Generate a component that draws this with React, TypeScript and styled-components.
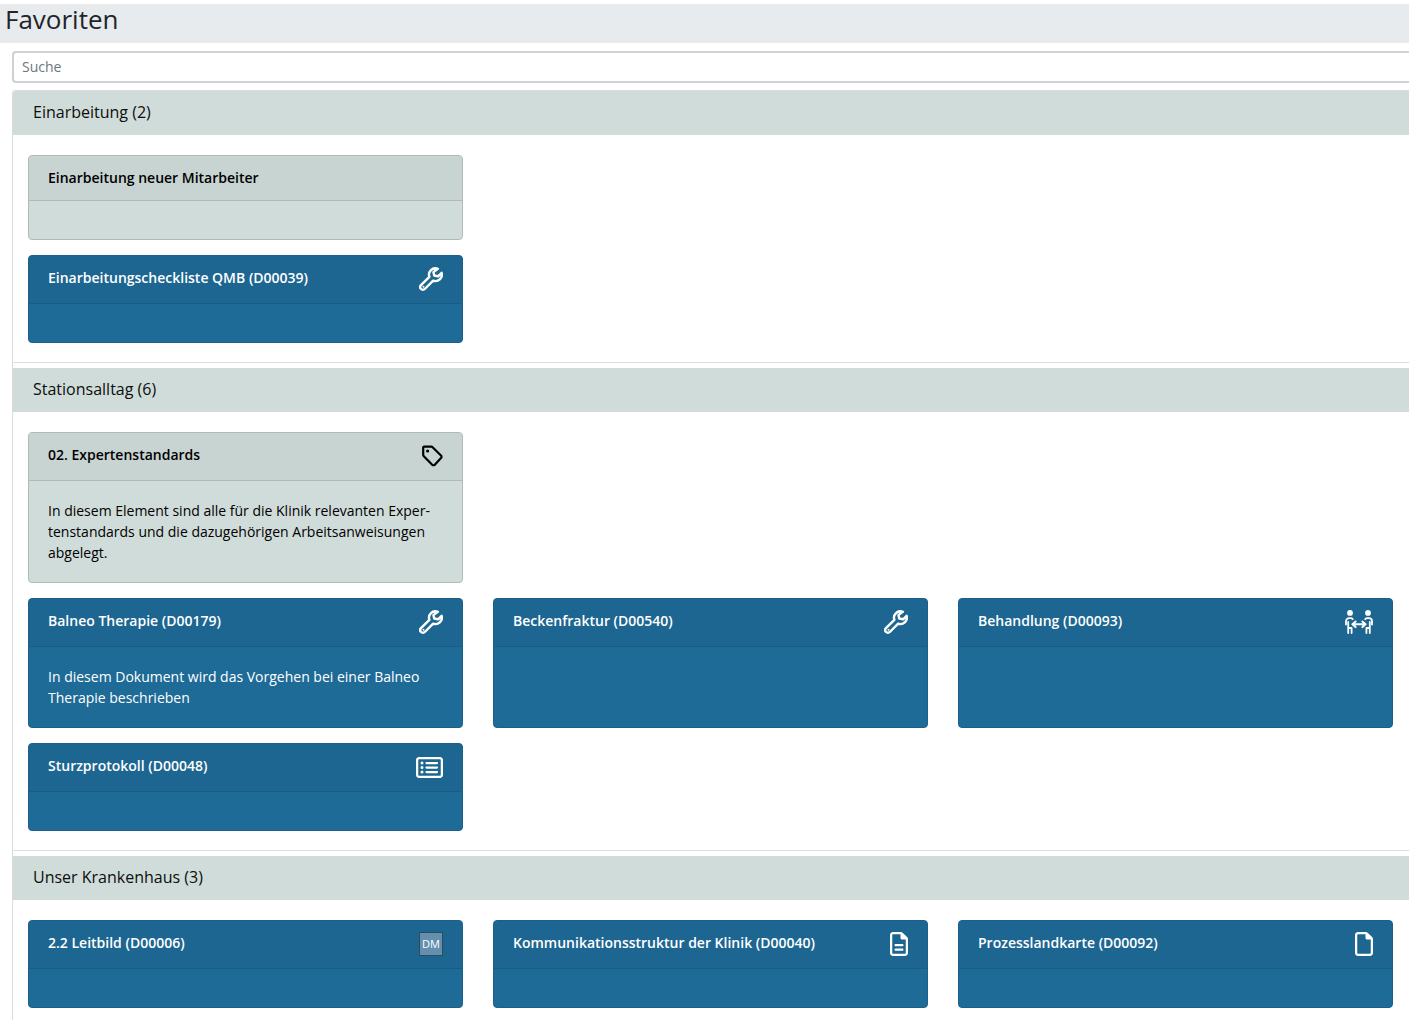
import React from "react";
import styled, { createGlobalStyle } from "styled-components";
import { FaRegFile, FaRegFileLines, FaRegRectangleList } from "react-icons/fa6";

const GlobalStyle = createGlobalStyle`
  *, *::before, *::after { box-sizing: border-box; }
  body {
    margin: 0;
    background: #fff;
    color: #212529;
    font-family: "Open Sans", "Noto Sans", sans-serif;
    font-size: 14px;
    line-height: 21px;
    scrollbar-width: none;
  }
  html { scrollbar-width: none; }
`;

const Page = styled.div`
  padding-top: 4px;
  overflow-x: hidden;
`;

const TitleBar = styled.header`
  padding: 0 5px 9px;
  background: #e8ebee;
`;

const Title = styled.h1`
  margin: 0;
  font-size: 26px;
  font-weight: 400;
  line-height: 30px;
`;

const Main = styled.main`
  display: flex;
  flex-direction: column;
  gap: 7px;
  padding: 8px 0 0 12px;
`;

const Search = styled.input`
  width: 100%;
  height: 32px;
  padding: 0 8px 2px;
  border: 2px solid #ced2d4;
  border-right: 0;
  border-radius: 4px 0 0 4px;
  background: #fff;
  color: #212529;
  font: inherit;
  &::placeholder { color: #6c757d; opacity: 1; }
`;

const Groups = styled.div`
  display: flex;
  flex-direction: column;
  gap: 5px;
  border: 1px solid #d9dddd;
  border-right: 0;
  border-radius: 4px 0 0 0;
  overflow: hidden;
`;

const Group = styled.section`
  border-bottom: 1px solid #dcdfdf;
`;

const GroupTitle = styled.h2`
  margin: 0;
  padding: 9px 20px 10px;
  border-bottom: 1px solid #d5dddb;
  background: #d0dcd9;
  color: #0c0f0e;
  font-size: 16px;
  font-weight: 400;
  line-height: 24px;
`;

const GroupBody = styled.div`
  display: flex;
  flex-direction: column;
  gap: 15px;
  padding: 20px 16px 19px 15px;
`;

const CardGrid = styled.div`
  display: grid;
  grid-template-columns: repeat(3, minmax(0, 1fr));
  gap: 15px 30px;
`;

type Tone = "light" | "blue";

const CardBox = styled.article<{ $tone: Tone }>`
  display: flex;
  flex-direction: column;
  border: 1px solid ${(p) => (p.$tone === "blue" ? "#1b608a" : "#b0bbb8")};
  border-radius: 4px;
  background: ${(p) => (p.$tone === "blue" ? "#1e6b98" : "#d0dcd9")};
  color: ${(p) => (p.$tone === "blue" ? "#fff" : "#000")};
  overflow: hidden;
`;

const CardHeader = styled.div<{ $tone: Tone }>`
  display: flex;
  justify-content: space-between;
  align-items: flex-start;
  padding: 11px 19px 12px;
  border-bottom: 1px solid ${(p) => (p.$tone === "blue" ? "#1b5c84" : "#b0bbb8")};
  background: ${(p) => (p.$tone === "blue" ? "#1d6691" : "#c8d4d1")};
`;

const CardTitle = styled.h3`
  margin: 0;
  font-size: 14px;
  font-weight: 600;
  line-height: 21px;
`;

const CardBody = styled.div`
  padding: 19px;
`;

const CardText = styled.p`
  margin: 0;
`;

const IconSlot = styled.span`
  display: flex;
  align-items: center;
  height: 24px;
  svg { display: block; }
`;

const PlainFileIcon = styled(FaRegFile)`
  width: 18px;
  height: 24px;
`;

const TextFileIcon = styled(FaRegFileLines)`
  width: 18px;
  height: 24px;
`;

const Badge = styled.span`
  display: grid;
  place-items: center;
  width: 24px;
  height: 24px;
  border: 1px solid #34485a;
  background: #6390af;
  color: #fff;
  font-size: 11px;
  line-height: 16px;
`;

const WrenchIcon = () => (
  <svg width="24" height="24" viewBox="0 0 24 24" fill="none" stroke="currentColor" strokeWidth="2.4" strokeLinejoin="round" strokeLinecap="round">
    <path d="M18.9 1.8a6.4 6.4 0 0 0-8.5 8.1L2 18.2a2.6 2.6 0 0 0 3.8 3.8l8.3-8.4a6.4 6.4 0 0 0 8.5-7.8l-3.5 3.5-3.9-.8-.8-3.4z" />
    <circle cx="4.3" cy="19.8" r=".5" fill="currentColor" strokeWidth="1" />
  </svg>
);

const TagIcon = () => (
  <svg width="21" height="22" viewBox="0 0 21 22" fill="none" stroke="currentColor" strokeWidth="2.2" strokeLinejoin="round">
    <path d="M2 1.6h7.2a2 2 0 0 1 1.4.6l8.4 8.3a1.8 1.8 0 0 1 0 2.6l-6.2 6.6a1.8 1.8 0 0 1-2.6 0L1.8 11.2a2 2 0 0 1-.6-1.4V2.4z" />
    <circle cx="5.6" cy="6" r="1.6" fill="currentColor" stroke="none" />
  </svg>
);

const PeopleIcon = () => (
  <svg width="28" height="24" viewBox="0 0 28 24" fill="none" stroke="currentColor" strokeWidth="1.8" strokeLinecap="round" strokeLinejoin="round">
    <circle cx="5" cy="2.9" r="2.9" fill="currentColor" stroke="none" />
    <circle cx="23" cy="2.9" r="2.9" fill="currentColor" stroke="none" />
    <path d="M1 14.6v-3.3a3.2 3.2 0 0 1 3.2-3.2h1.4q1.4 0 2.2 1M3.2 12v11M3.2 18h3.4M6.6 18v5" />
    <path d="M27 14.6v-3.3a3.2 3.2 0 0 0-3.2-3.2h-1.4q-1.4 0-2.2 1M24.8 12v11M24.8 18h-3.4M21.4 18v5" />
    <path d="M7.6 14.3h12.8M10.6 11.5L7.4 14.3l3.2 2.8M17.4 11.5l3.2 2.8-3.2 2.8" strokeWidth="2" />
  </svg>
);

const icons = {
  wrench: <WrenchIcon />,
  tag: <TagIcon />,
  people: <PeopleIcon />,
  list: <FaRegRectangleList size={27} />,
  lines: <TextFileIcon />,
  file: <PlainFileIcon />,
  dm: <Badge>DM</Badge>,
};

interface Item {
  title: string;
  tone: Tone;
  icon?: keyof typeof icons;
  text?: string;
}

const groups: { name: string; count: number; rows: Item[][] }[] = [
  {
    name: "Einarbeitung",
    count: 2,
    rows: [
      [{ title: "Einarbeitung neuer Mitarbeiter", tone: "light" }],
      [{ title: "Einarbeitungscheckliste QMB (D00039)", tone: "blue", icon: "wrench" }],
    ],
  },
  {
    name: "Stationsalltag",
    count: 6,
    rows: [
      [
        {
          title: "02. Expertenstandards",
          tone: "light",
          icon: "tag",
          text: "In diesem Element sind alle für die Klinik relevanten Exper\u00ADtenstandards und die dazugehörigen Arbeitsanweisungen abgelegt.",
        },
      ],
      [
        {
          title: "Balneo Therapie (D00179)",
          tone: "blue",
          icon: "wrench",
          text: "In diesem Dokument wird das Vorgehen bei einer Balneo Therapie beschrieben",
        },
        { title: "Beckenfraktur (D00540)", tone: "blue", icon: "wrench" },
        { title: "Behandlung (D00093)", tone: "blue", icon: "people" },
        { title: "Sturzprotokoll (D00048)", tone: "blue", icon: "list" },
      ],
    ],
  },
  {
    name: "Unser Krankenhaus",
    count: 3,
    rows: [
      [
        { title: "2.2 Leitbild (D00006)", tone: "blue", icon: "dm" },
        { title: "Kommunikationsstruktur der Klinik (D00040)", tone: "blue", icon: "lines" },
        { title: "Prozesslandkarte (D00092)", tone: "blue", icon: "file" },
      ],
    ],
  },
];

const Card = ({ title, tone, icon, text }: Item) => (
  <CardBox $tone={tone}>
    <CardHeader $tone={tone}>
      <CardTitle>{title}</CardTitle>
      {icon && <IconSlot>{icons[icon]}</IconSlot>}
    </CardHeader>
    <CardBody>{text && <CardText>{text}</CardText>}</CardBody>
  </CardBox>
);

export default function App() {
  return (
    <Page lang="de">
      <GlobalStyle />
      <TitleBar>
        <Title>Favoriten</Title>
      </TitleBar>
      <Main>
        <Search type="search" placeholder="Suche" aria-label="Suche" />
        <Groups>
          {groups.map((group) => (
            <Group key={group.name}>
              <GroupTitle>{`${group.name} (${group.count})`}</GroupTitle>
              <GroupBody>
                {group.rows.map((row) => (
                  <CardGrid key={row[0].title}>
                    {row.map((item) => (
                      <Card key={item.title} {...item} />
                    ))}
                  </CardGrid>
                ))}
              </GroupBody>
            </Group>
          ))}
        </Groups>
      </Main>
    </Page>
  );
}
